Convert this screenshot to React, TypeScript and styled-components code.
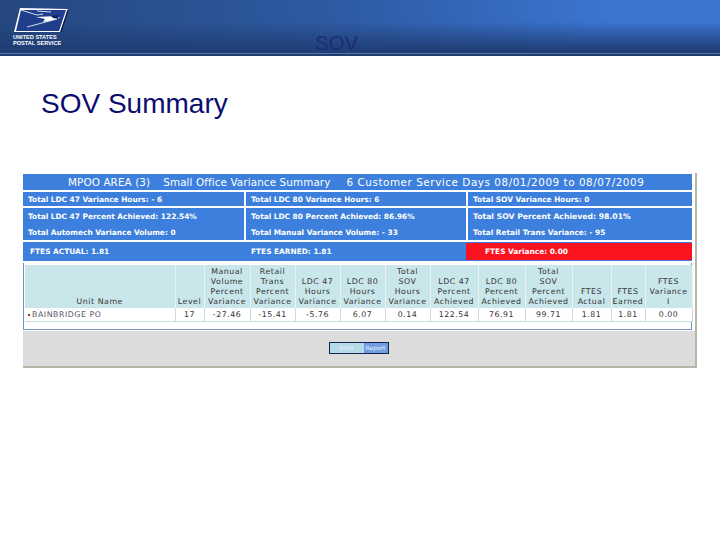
import React from "react";
import styled, { createGlobalStyle } from "styled-components";

const GlobalStyle = createGlobalStyle`
    html, body {
        margin: 0;
        padding: 0;
        background: #fff;
    }
`;

const columns = [
    { label: ["Unit Name"], value: "BAINBRIDGE PO", width: 150 },
    { label: ["Level"], value: "17", width: 29 },
    { label: ["Manual", "Volume", "Percent", "Variance"], value: "-27.46", width: 46 },
    { label: ["Retail", "Trans", "Percent", "Variance"], value: "-15.41", width: 45 },
    { label: ["LDC 47", "Hours", "Variance"], value: "-5.76", width: 45 },
    { label: ["LDC 80", "Hours", "Variance"], value: "6.07", width: 45 },
    { label: ["Total", "SOV", "Hours", "Variance"], value: "0.14", width: 45 },
    { label: ["LDC 47", "Percent", "Achieved"], value: "122.54", width: 48 },
    { label: ["LDC 80", "Percent", "Achieved"], value: "76.91", width: 47 },
    { label: ["Total", "SOV", "Percent", "Achieved"], value: "99.71", width: 47 },
    { label: ["FTES", "Actual"], value: "1.81", width: 39 },
    { label: ["FTES", "Earned"], value: "1.81", width: 34 },
    { label: ["FTES", "Variance", "I"], value: "0.00", width: 47 },
];

const App: React.FC = () => (
    <Page>
        <GlobalStyle />
        <Header>
            <Logo>
                <svg width="56" height="25" viewBox="0 0 56 25">
                    <polygon points="7,0 55,1 47,24 1,24" fill="#fff" />
                    <polygon points="8,2 53,2 46,23 3,23" fill="#1f3f8c" />
                    <path d="M8 2 L24 7 L30 6 M24 3 L38 4" stroke="#fff" strokeWidth="0.8" fill="none" />
                    <polygon points="23,9 44,8 47,10 36,13 30,14 32,11" fill="#fff" />
                    <polygon points="38,8 46,7 45,11 40,10" fill="#10205c" />
                    <path d="M14 19 L44 11" stroke="#fff" strokeWidth="0.8" />
                    <path d="M55 2 L48 24" stroke="#0c1a44" strokeWidth="1.2" />
                </svg>
                <LogoText>
                    UNITED STATES
                    <br />
                    POSTAL SERVICE
                </LogoText>
            </Logo>
            <HeaderTitle>SOV</HeaderTitle>
        </Header>

        <Title>SOV Summary</Title>

        <Panel>
            <BlueTitle>
                <TitlePart $gap={13}>MPOO AREA (3)</TitlePart>
                <TitlePart $gap={16}>Small Office Variance Summary</TitlePart>
                <TitlePart $spacing={0.55}>6 Customer Service Days 08/01/2009 to 08/07/2009</TitlePart>
            </BlueTitle>

            <SummaryRow>
                <SummaryCell>
                    <SummaryLine>Total LDC 47 Variance Hours: - 6</SummaryLine>
                </SummaryCell>
                <SummaryCell>
                    <SummaryLine>Total LDC 80 Variance Hours: 6</SummaryLine>
                </SummaryCell>
                <SummaryCell>
                    <SummaryLine>Total SOV Variance Hours: 0</SummaryLine>
                </SummaryCell>
            </SummaryRow>

            <SummaryRow $tall>
                <SummaryCell>
                    <SummaryLine>Total LDC 47 Percent Achieved: 122.54%</SummaryLine>
                    <SummaryLine>Total Automech Variance Volume: 0</SummaryLine>
                </SummaryCell>
                <SummaryCell>
                    <SummaryLine>Total LDC 80 Percent Achieved: 86.96%</SummaryLine>
                    <SummaryLine>Total Manual Variance Volume: - 33</SummaryLine>
                </SummaryCell>
                <SummaryCell>
                    <SummaryLine $large>Total SOV Percent Achieved: 98.01%</SummaryLine>
                    <SummaryLine>Total Retail Trans Variance: - 95</SummaryLine>
                </SummaryCell>
            </SummaryRow>

            <FtesRow>
                <FtesCell>FTES ACTUAL: 1.81</FtesCell>
                <FtesCell>FTES EARNED: 1.81</FtesCell>
                <FtesAlert>FTES Variance: 0.00</FtesAlert>
            </FtesRow>

            <TableBox>
                <Table>
                    <thead>
                        <tr>
                            {columns.map((column, index) => (
                                <HeadCell key={index} style={{ width: column.width }}>
                                    {column.label.map(line => (
                                        <div key={line}>{line}</div>
                                    ))}
                                </HeadCell>
                            ))}
                        </tr>
                    </thead>
                    <tbody>
                        <tr>
                            {columns.map((column, index) =>
                                index === 0 ? (
                                    <UnitCell key={index}>
                                        <Bullet />
                                        {column.value}
                                    </UnitCell>
                                ) : (
                                    <ValueCell key={index}>{column.value}</ValueCell>
                                )
                            )}
                        </tr>
                    </tbody>
                </Table>
            </TableBox>

            <Footer>
                <ActionButton>
                    <ButtonHalf>Print</ButtonHalf>
                    <ButtonHalf $active>Report</ButtonHalf>
                </ActionButton>
            </Footer>
        </Panel>
    </Page>
);

export default App;

const Page = styled.div`
    width: 720px;
    height: 540px;
    overflow: hidden;
    background: #fff;
    font-family: "Liberation Sans", Arial, sans-serif;
`;

const Header = styled.header`
    box-sizing: border-box;
    height: 56px;
    padding: 8px 0 0 13px;
    display: flex;
    position: relative;
    border-bottom: 2px solid #1e3c6e;
    box-shadow: inset 0 -1px 0 #5b74a8;
    background:
        linear-gradient(to bottom, rgba(31, 61, 115, 0) 40%, rgba(31, 61, 115, 0.95) 92%),
        linear-gradient(to right, #24477f 0%, #2f5ca6 50%, #3b75d2 85%, #3b75d2 100%);
`;

const Logo = styled.div`
    width: 56px;
    display: flex;
    flex-direction: column;
`;

const LogoText = styled.div`
    margin-top: 1px;
    color: #fff;
    font-size: 5.6px;
    font-weight: bold;
    line-height: 6px;
    white-space: nowrap;
`;

const HeaderTitle = styled.div`
    position: absolute;
    left: 315px;
    top: 31px;
    font-size: 20.5px;
    line-height: 24px;
    color: #1c2c7a;
`;

const Title = styled.h1`
    margin: 32px 0 0 41px;
    font-size: 28px;
    line-height: 32px;
    font-weight: normal;
    color: #0d0d70;
`;

const Panel = styled.section`
    box-sizing: border-box;
    width: 674px;
    height: 195px;
    margin: 53px 0 0 23px;
    padding: 1px 3px 0 0;
    display: flex;
    flex-direction: column;
    gap: 2px;
    background: #fff;
    border-right: 2px solid #b5b5a8;
    border-bottom: 2px solid #b5b5a8;
    font-family: "DejaVu Sans", Verdana, sans-serif;
`;

const BlueTitle = styled.div`
    height: 16px;
    padding-left: 45px;
    display: flex;
    align-items: center;
    background: #3d7fdc;
    color: #fff;
    font-size: 10.4px;
    white-space: nowrap;
`;

const TitlePart = styled.span<{ $gap?: number; $spacing?: number }>`
    margin-right: ${props => props.$gap ?? 0}px;
    letter-spacing: ${props => props.$spacing ?? 0.1}px;
`;

const SummaryRow = styled.div<{ $tall?: boolean }>`
    height: ${props => (props.$tall ? 32 : 14)}px;
    display: grid;
    grid-template-columns: 221px 220px 1fr;
    gap: 2px;
`;

const SummaryCell = styled.div`
    padding: 0 0 0 5px;
    display: flex;
    flex-direction: column;
    justify-content: space-around;
    background: #3d7fdc;
`;

const SummaryLine = styled.div<{ $large?: boolean }>`
    color: #fff;
    font-size: ${props => (props.$large ? 7.7 : 7.4)}px;
    font-weight: bold;
    white-space: nowrap;
`;

const FtesRow = styled.div`
    height: 19px;
    display: grid;
    grid-template-columns: 221px 222px 1fr;
    background: #3d7fdc;
    color: #fff;
    font-size: 7.4px;
    font-weight: bold;
`;

const FtesCell = styled.div`
    padding-left: 7px;
    display: flex;
    align-items: center;
`;

const FtesAlert = styled(FtesCell)`
    margin: 1px 0;
    padding-left: 19px;
    background: #fb1420;
`;

const TableBox = styled.div`
    box-sizing: border-box;
    height: 67px;
    padding: 2px 0 0 1px;
    border: 1px solid #7095bd;
    border-top: none;
    background: #fff;
`;

const Table = styled.table`
    width: 667px;
    table-layout: fixed;
    border-collapse: collapse;
    color: #333;
    font-size: 7.8px;
    letter-spacing: 0.55px;
`;

const HeadCell = styled.th`
    box-sizing: border-box;
    height: 43px;
    padding: 0 0 1px;
    vertical-align: bottom;
    text-align: center;
    font-weight: normal;
    line-height: 10px;
    white-space: nowrap;
    overflow: hidden;
    background: #c9e6ea;
    border-right: 1px solid #e8f4f5;
`;

const ValueCell = styled.td`
    box-sizing: border-box;
    height: 13px;
    padding: 0;
    text-align: center;
    background: #fff;
    border-right: 1px solid #c9dcdc;
    border-bottom: 1px solid #c9dcdc;
`;

const UnitCell = styled(ValueCell)`
    padding-left: 3px;
    text-align: left;
    color: #556;
`;

const Bullet = styled.span`
    display: inline-block;
    width: 2px;
    height: 2px;
    margin-right: 2px;
    vertical-align: middle;
    background: #a33;
`;

const Footer = styled.div`
    flex: 1;
    margin: -1px -3px 0 0;
    display: flex;
    align-items: flex-start;
    justify-content: center;
    padding-top: 11px;
    padding-right: 1px;
    background: #dcdcdc;
`;

const ActionButton = styled.div`
    width: 60px;
    height: 12px;
    box-sizing: border-box;
    display: flex;
    border: 1px solid #14214d;
    font-size: 6px;
    line-height: 10px;
    color: #e8f3f8;
`;

const ButtonHalf = styled.div<{ $active?: boolean }>`
    width: ${props => (props.$active ? 24 : 34)}px;
    text-align: center;
    overflow: hidden;
    background: ${props => (props.$active ? "#6f9de2" : "#b6dbe8")};
`;
